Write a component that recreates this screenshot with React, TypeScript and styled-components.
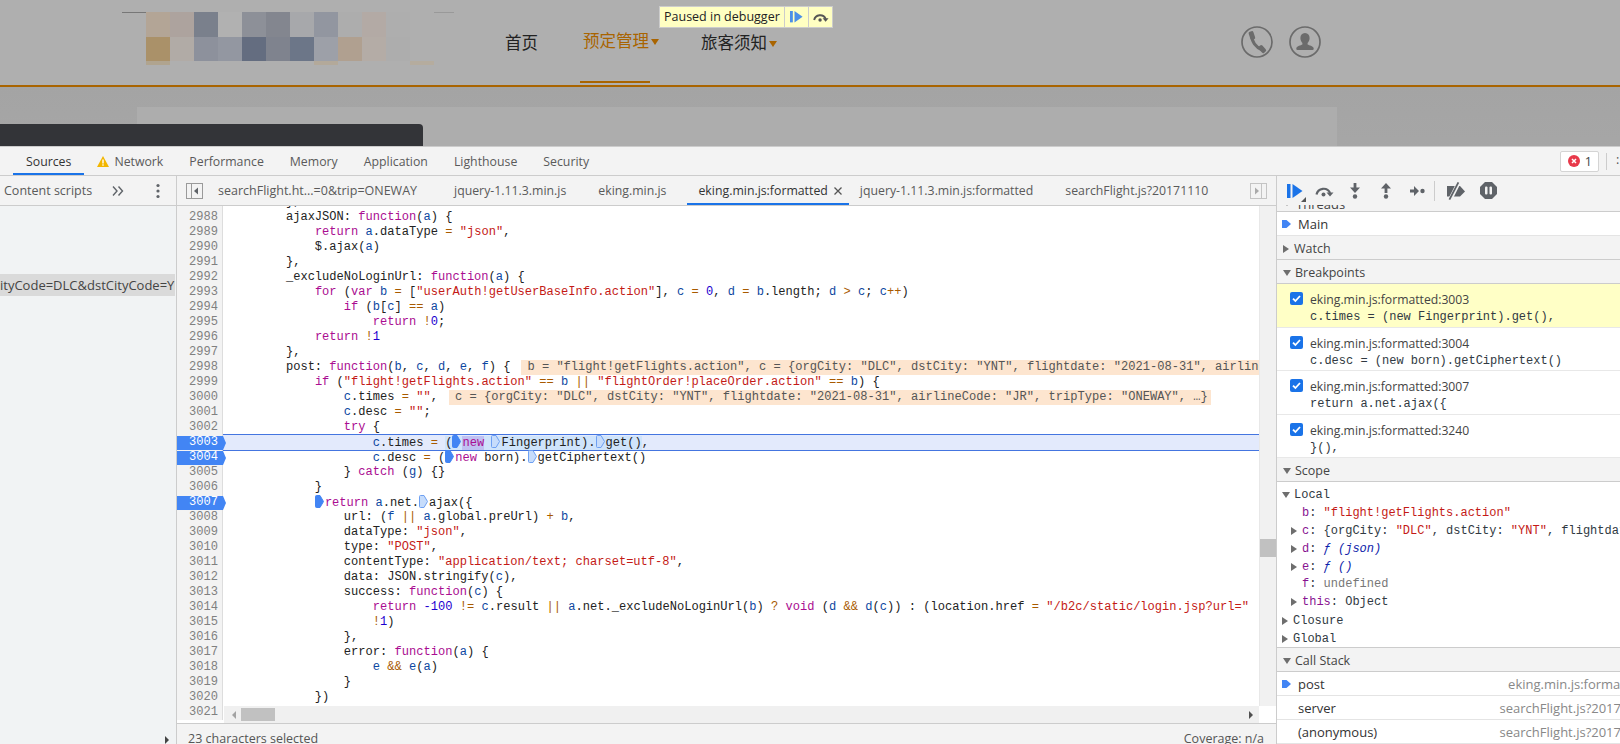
import React from "react";
import styled, { createGlobalStyle } from "styled-components";

const UI_FONT = `"Open Sans", "Noto Sans", sans-serif`;
const MONO_FONT = `"Liberation Mono", monospace`;

const GlobalStyle = createGlobalStyle`
  html, body {
    margin: 0;
    padding: 0;
    background: #f3f3f3;
  }
  #root {
    width: 1620px;
    height: 744px;
    overflow: hidden;
  }
`;

const Page = styled.div`
  display: flex;
  flex-direction: column;
  width: 1620px;
  height: 744px;
  font-family: ${UI_FONT};
  font-size: 12.5px;
  color: #444;
`;

/* ---------- the page behind the devtools ---------- */

const Site = styled.div`
  position: relative;
  height: 146px;
  flex-shrink: 0;
  background: #a6a6a6;
  overflow: hidden;
`;
const SiteBar = styled.div`
  display: flex;
  height: 85px;
  padding-left: 122px;
  background: #afafaf;
  border-bottom: 2px solid #a96400;
`;
const Logo = styled.div`
  display: grid;
  grid-template-columns: repeat(12, 24px);
  grid-template-rows: 25px 24px 4px;
  width: 308px;
  height: 53px;
  margin-top: 12px;
  padding-left: 24px;
  background: linear-gradient(
      90deg,
      #777 0 70px,
      transparent 70px 120px,
      #777 120px 144px,
      transparent 144px 216px,
      #777 216px 240px,
      transparent 240px 264px,
      #777 264px 288px,
      transparent 288px 312px,
      #999 312px 332px
    )
    top left / 332px 1px no-repeat;
`;
const LogoCell = styled.div<{ $c: string }>`
  background: ${(p) => p.$c};
`;
const Nav = styled.nav`
  display: flex;
  margin-left: 51px;
  font-family: "Noto Sans CJK SC", sans-serif;
  font-size: 16.5px;
  line-height: 22px;
  color: #222;
`;
const NavItem = styled.div<{ $active?: boolean }>`
  position: relative;
  display: flex;
  align-items: center;
  align-self: flex-start;
  gap: 2px;
  height: 22px;
  margin: ${(p) => (p.$active ? "29px" : "31px")} 42px 0 0;
  color: ${(p) => (p.$active ? "#a96400" : "#222")};
  &:first-child {
    margin-right: 45px;
  }
  ${(p) =>
    p.$active &&
    `&::after {
      content: "";
      position: absolute;
      left: -3px;
      top: 52px;
      width: 70px;
      height: 2px;
      background: #a96400;
    }`}
`;
const Caret = styled.span`
  width: 0;
  height: 0;
  margin-top: 3px;
  border-left: 4px solid transparent;
  border-right: 4px solid transparent;
  border-top: 6px solid #a96400;
`;
const SiteIcons = styled.div`
  display: flex;
  gap: 16px;
  margin: 26px 299px 0 auto;
`;
const SiteBody = styled.div`
  height: 59px;
  padding: 20px 0 0 137px;
  background: linear-gradient(#a4a4a4, #a7a7a7);
`;
const BlankCard = styled.div`
  width: 1200px;
  height: 39px;
  background: #adadad;
`;
const DarkCard = styled.div`
  position: absolute;
  left: 0;
  top: 124px;
  width: 423px;
  height: 22px;
  background: #333438;
  border-top-right-radius: 4px;
`;
const PausedBadge = styled.div`
  position: absolute;
  left: 659px;
  top: 6px;
  display: flex;
  align-items: stretch;
  height: 22px;
  background: #ffffc2;
  border: 1px solid #ccc;
  box-sizing: border-box;
  color: #222;
`;
const PausedLabel = styled.span`
  padding: 0 4px;
  line-height: 20px;
`;
const PausedButton = styled.span`
  display: flex;
  align-items: center;
  justify-content: center;
  width: 23px;
  border-left: 1px solid #ccc;
`;

/* ---------- devtools chrome ---------- */

const DevTools = styled.div`
  flex: 1;
  display: flex;
  flex-direction: column;
  min-height: 0;
  background: #f3f3f3;
  border-top: 1px solid #ccc;
`;
const MainTabs = styled.div`
  display: flex;
  align-items: stretch;
  height: 28px;
  flex-shrink: 0;
  padding-left: 13px;
  border-bottom: 1px solid #ccc;
`;
const MainTab = styled.div<{ $active?: boolean }>`
  display: flex;
  align-items: center;
  gap: 5px;
  padding: 0 13px;
  font-size: 12.3px;
  color: ${(p) => (p.$active ? "#333" : "#5a5a5a")};
  box-shadow: ${(p) => (p.$active ? "inset 0 -2px 0 #1a73e8" : "none")};
`;
const ErrorBadge = styled.div`
  display: flex;
  align-items: center;
  gap: 5px;
  align-self: center;
  height: 21px;
  padding: 0 6px 0 7px;
  margin-left: auto;
  box-sizing: border-box;
  background: #fff;
  border: 1px solid #d4d4d4;
  border-radius: 2px;
  color: #444;
`;
const TabsEnd = styled.div`
  width: 1px;
  height: 17px;
  align-self: center;
  margin: 0 13px 0 7px;
  background: #ccc;
  position: relative;
  &::after {
    content: ":";
    position: absolute;
    left: 10px;
    top: -2px;
    color: #555;
  }
`;
const Workspace = styled.div`
  flex: 1;
  display: flex;
  min-height: 0;
`;
const Toolbar = styled.div`
  display: flex;
  align-items: center;
  height: 29px;
  flex-shrink: 0;
  background: #f3f3f3;
  border-bottom: 1px solid #ccc;
`;

/* ---------- left navigator ---------- */

const Navigator = styled.aside`
  position: relative;
  display: flex;
  flex-direction: column;
  width: 176px;
  flex-shrink: 0;
  background: #f1f3f4;
  border-right: 1px solid #ccc;
`;
const NavTitle = styled.span`
  margin-left: 4px;
  color: #5a5a5a;
  white-space: nowrap;
`;
const MoreTabs = styled.span`
  display: flex;
  margin-left: 20px;
`;
const MenuSlot = styled.span`
  display: flex;
  margin-left: auto;
  margin-right: 16px;
`;
const FileRow = styled.div`
  height: 22px;
  margin: 68px 1px 0 0;
  background: #dadada;
  line-height: 22px;
  font-size: 13px;
  color: #444;
  white-space: nowrap;
  overflow: hidden;
`;
const CornerMark = styled.span`
  position: absolute;
  left: 165px;
  bottom: 0;
  width: 0;
  height: 0;
  border-top: 4px solid transparent;
  border-left: 4px solid #444;
  border-bottom: 4px solid transparent;
`;

/* ---------- source editor ---------- */

const Center = styled.section`
  flex: 1;
  display: flex;
  flex-direction: column;
  min-width: 0;
`;
const ToggleSlot = styled.span<{ $side: "left" | "right" }>`
  display: flex;
  align-items: center;
  flex-shrink: 0;
  padding: ${(p) => (p.$side === "left" ? "0 4px 0 9px" : "0 9px")};
`;
const EditorTabs = styled.div`
  display: flex;
  align-self: stretch;
  flex: 1;
  gap: 10px;
  height: 100%;
`;
const EditorTab = styled.div<{ $active?: boolean }>`
  display: flex;
  align-items: center;
  gap: 5px;
  padding: ${(p) => (p.$active ? "0 6px 0 11px" : "0 11px")};
  margin-right: ${(p) => (p.$active ? "-10px" : "0")};
  font-size: 12.3px;
  white-space: nowrap;
  color: ${(p) => (p.$active ? "#333" : "#5a5a5a")};
  box-shadow: ${(p) => (p.$active ? "inset 0 -2px 0 #1a73e8" : "none")};
  &:first-child {
    margin-right: 5px;
    font-size: 12.5px;
  }
`;
const Editor = styled.div`
  position: relative;
  flex: 1;
  display: flex;
  min-height: 0;
  background: #fff;
`;
const CodePane = styled.div`
  flex: 1;
  min-width: 0;
  overflow: hidden;
  padding-top: 2px;
`;
const CodeLines = styled.div`
  margin-top: -13px;
  font-family: ${MONO_FONT};
  font-size: 12.07px;
  line-height: 15px;
  color: #222;
`;
const CodeRow = styled.div`
  display: flex;
  height: 15px;
  white-space: pre;
`;
const LineNo = styled.div<{ $bp?: boolean }>`
  position: relative;
  flex-shrink: 0;
  width: 41px;
  padding-right: 4px;
  text-align: right;
  color: ${(p) => (p.$bp ? "#fff" : "#808080")};
  border-right: 1px solid #ddd;
  background: #f3f3f3;
  span {
    position: relative;
  }
  ${(p) =>
    p.$bp &&
    `&::before {
      content: "";
      position: absolute;
      left: 0;
      top: 1px;
      width: 49px;
      height: 14px;
      z-index: 1;
      background: #4285f4;
      clip-path: polygon(0 0, 46px 0, 49px 50%, 46px 100%, 0 100%);
    }
    span { z-index: 2; }`}
`;
const CodeText = styled.div<{ $current?: boolean }>`
  flex: 1;
  min-width: 0;
  padding-left: 5px;
  overflow: ${(p) => (p.$current ? "visible" : "hidden")};
  ${(p) =>
    p.$current &&
    `background: #e3eafc;
     box-shadow: 0 -1px 0 #4475e0, 0 1px 0 #4475e0;`}
`;
const Token = styled.span<{ $c: string }>`
  color: ${(p) => p.$c};
`;
const SearchHit = styled.span`
  color: #aa0d91;
  background: #c0c0f2;
`;
const Selection = styled.span`
  background: #cfe4fb;
`;
const InlineHint = styled.span`
  margin-left: 11px;
  padding: 0 3px 0 6px;
  display: inline-block;
  background: #fde5cf;
  color: #555;
`;
const BpMark = styled.svg`
  display: inline-block;
  vertical-align: -2px;
  margin-right: 1px;
`;
const VTrack = styled.div`
  width: 17px;
  flex-shrink: 0;
  padding-top: 333px;
  box-sizing: border-box;
  background: #f1f1f1;
  border-left: 1px solid #e8e8e8;
`;
const VThumb = styled.div`
  height: 18px;
  background: #c1c1c1;
`;
const HScroll = styled.div`
  position: absolute;
  left: 47px;
  right: 17px;
  bottom: 0;
  height: 17px;
  display: flex;
  align-items: center;
  justify-content: space-between;
  padding: 0 6px 0 8px;
  box-sizing: border-box;
  background: #f0f0f0;
`;
const ScrollCorner = styled.div`
  position: absolute;
  right: 0;
  bottom: 0;
  width: 17px;
  height: 17px;
  background: #fff;
`;
const ArrowLeft = styled.span`
  border-top: 4px solid transparent;
  border-bottom: 4px solid transparent;
  border-right: 4px solid #a3a3a3;
`;
const ArrowRight = styled.span`
  border-top: 4px solid transparent;
  border-bottom: 4px solid transparent;
  border-left: 4px solid #505050;
`;
const HThumb = styled.div`
  width: 34px;
  height: 13px;
  margin: 0 auto 0 5px;
  background: #c1c1c1;
`;
const StatusBar = styled.div`
  display: flex;
  justify-content: space-between;
  height: 21px;
  flex-shrink: 0;
  padding: 7px 12px 0 11px;
  box-sizing: border-box;
  border-top: 1px solid #ccc;
  background: #f3f3f3;
  color: #555;
  line-height: 16px;
  overflow: hidden;
`;

/* ---------- debugger sidebar ---------- */

const Sidebar = styled.aside`
  width: 343px;
  flex-shrink: 0;
  display: flex;
  flex-direction: column;
  border-left: 1px solid #ccc;
  background: #fff;
  overflow: hidden;
`;
const DebugBar = styled(Toolbar)`
  position: relative;
  z-index: 1;
  padding-left: 10px;
  border-bottom: none;
`;
const DebugIcon = styled.span<{ $w: number }>`
  display: flex;
  justify-content: center;
  width: ${(p) => p.$w}px;
`;
const DebugDivider = styled.span`
  width: 1px;
  height: 20px;
  margin: 0 11px 0 7px;
  background: #ccc;
`;
const ResumeMenuMark = styled.span`
  position: absolute;
  left: 24px;
  bottom: 3px;
  width: 0;
  height: 0;
  border-left: 5px solid transparent;
  border-bottom: 5px solid #555;
`;
const ClippedPane = styled.div`
  display: flex;
  align-items: flex-start;
  gap: 5px;
  height: 7px;
  padding-left: 6px;
  overflow: hidden;
  background: #f3f3f3;
  border-bottom: 1px solid #ccc;
  font-size: 13px;
  color: #444;
`;
const ClippedTitle = styled.span`
  line-height: 16px;
  margin-top: -9px;
`;
const ClippedArrow = styled.span`
  margin-top: -5px;
  display: flex;
`;
const PlainRow = styled.div`
  display: flex;
  align-items: center;
  height: 22px;
  flex-shrink: 0;
  padding: 1px 0 0 5px;
  font-size: 13px;
  color: #333;
  border-bottom: 1px solid #e4e4e4;
  white-space: nowrap;
`;
const RowMarker = styled.span`
  display: flex;
  width: 16px;
`;
const StackLocation = styled.span<{ $overflow: number }>`
  margin-left: auto;
  margin-right: -${(p) => p.$overflow}px;
  color: #888;
`;
const PaneHeader = styled.div`
  display: flex;
  align-items: center;
  gap: 4px;
  height: 21px;
  flex-shrink: 0;
  padding: 2px 0 0 6px;
  background: #f3f3f3;
  border-bottom: 1px solid #ccc;
  color: #444;
`;
const Triangle = styled.span<{ $open?: boolean }>`
  width: 0;
  height: 0;
  flex-shrink: 0;
  ${(p) =>
    p.$open
      ? `border-left: 4px solid transparent;
         border-right: 4px solid transparent;
         border-top: 6px solid #6e6e6e;`
      : `border-top: 4px solid transparent;
         border-bottom: 4px solid transparent;
         border-left: 6px solid #6e6e6e;
         margin-right: 1px;`}
`;
const BreakpointRow = styled.div<{ $hit?: boolean }>`
  display: grid;
  grid-template-columns: 13px 1fr;
  column-gap: 7px;
  height: 43.5px;
  flex-shrink: 0;
  padding: 7px 0 0 13px;
  box-sizing: border-box;
  background: ${(p) => (p.$hit ? "#ffffc6" : "#fff")};
  border-bottom: 1px solid #e8e8e8;
  &:last-of-type {
    border-bottom-color: #ccc;
  }
`;
const CheckBox = styled.span`
  display: flex;
  align-items: center;
  justify-content: center;
  width: 13px;
  height: 13px;
  margin-top: 1px;
  border-radius: 2px;
  background: #1a73e8;
`;
const BreakpointFile = styled.div`
  font-size: 12.2px;
  line-height: 18px;
  color: #444;
  white-space: nowrap;
`;
const BreakpointCode = styled.div`
  font-family: ${MONO_FONT};
  font-size: 12px;
  line-height: 17px;
  color: #303942;
  white-space: pre;
`;
const ScopeTree = styled.div`
  padding-top: 4px;
  font-family: ${MONO_FONT};
  font-size: 12px;
  color: #303942;
  border-bottom: 1px solid #ccc;
  white-space: pre;
`;
const ScopeRow = styled.div<{ $depth: number; $h: number }>`
  display: flex;
  align-items: center;
  gap: 4px;
  height: ${(p) => p.$h}px;
  padding-left: ${(p) => 5 + p.$depth * 9}px;
`;
const ScopeLeaf = styled.span`
  margin-left: 2px;
`;
const ScopeKey = styled.span`
  color: #881391;
`;
const ScopeString = styled.span`
  color: #c41a16;
`;
const ScopeFn = styled.span`
  color: #0d22aa;
  font-style: italic;
`;
const ScopeMuted = styled.span`
  color: #777;
`;

/* ---------- data ---------- */

const LOGO_COLORS = [
  "#b3a596", "#ada39e", "#7a808c", "#b1b1b1", "#8d9098", "#83868f", "#a7a8ab", "#9296a0", "#adadad", "#b3aaa5", "#aeaeae", "#afafaf",
  "#aa9169", "#b1aba6", "#8d919c", "#9397a1", "#646d80", "#7f838e", "#6c7688", "#9da0a8", "#b0a090", "#b4aca6", "#adadad", "#afafaf",
  "#b0a48f", "#afafaf", "#afafaf", "#afafaf", "#afafaf", "#afafaf", "#afafaf", "#b3a99a", "#afafaf", "#afafaf", "#afafaf", "#b5ac9e",
];

const MAIN_TABS = ["Performance", "Memory", "Application", "Lighthouse", "Security"];

const OPEN_FILES = [
  "searchFlight.ht...=0&trip=ONEWAY",
  "jquery-1.11.3.min.js",
  "eking.min.js",
  "eking.min.js:formatted",
  "jquery-1.11.3.min.js:formatted",
  "searchFlight.js?20171110",
];

// ◆ / ◇ are the inline breakpoint marks, « » the selection, [new] the search hit
const SOURCE: { n?: number; text: string; hint?: string; bp?: boolean; current?: boolean }[] = [
  { text: "        }," },
  { n: 2988, text: "        ajaxJSON: function(a) {" },
  { n: 2989, text: '            return a.dataType = "json",' },
  { n: 2990, text: "            $.ajax(a)" },
  { n: 2991, text: "        }," },
  { n: 2992, text: "        _excludeNoLoginUrl: function(a) {" },
  { n: 2993, text: '            for (var b = ["userAuth!getUserBaseInfo.action"], c = 0, d = b.length; d > c; c++)' },
  { n: 2994, text: "                if (b[c] == a)" },
  { n: 2995, text: "                    return !0;" },
  { n: 2996, text: "            return !1" },
  { n: 2997, text: "        }," },
  {
    n: 2998,
    text: "        post: function(b, c, d, e, f) {",
    hint: 'b = "flight!getFlights.action", c = {orgCity: "DLC", dstCity: "YNT", flightdate: "2021-08-31", airlineCode: "JR", tripType: "ONEWAY"',
  },
  { n: 2999, text: '            if ("flight!getFlights.action" == b || "flightOrder!placeOrder.action" == b) {' },
  {
    n: 3000,
    text: '                c.times = "",',
    hint: 'c = {orgCity: "DLC", dstCity: "YNT", flightdate: "2021-08-31", airlineCode: "JR", tripType: "ONEWAY", …}',
  },
  { n: 3001, text: '                c.desc = "";' },
  { n: 3002, text: "                try {" },
  { n: 3003, bp: true, current: true, text: "                    c.times = «(◆[new] ◇Fingerprint).◇get()»," },
  { n: 3004, bp: true, text: "                    c.desc = (◆new born).◇getCiphertext()" },
  { n: 3005, text: "                } catch (g) {}" },
  { n: 3006, text: "            }" },
  { n: 3007, bp: true, text: "            ◆return a.net.◇ajax({" },
  { n: 3008, text: "                url: (f || a.global.preUrl) + b," },
  { n: 3009, text: '                dataType: "json",' },
  { n: 3010, text: '                type: "POST",' },
  { n: 3011, text: '                contentType: "application/text; charset=utf-8",' },
  { n: 3012, text: "                data: JSON.stringify(c)," },
  { n: 3013, text: "                success: function(c) {" },
  {
    n: 3014,
    text: '                    return -100 != c.result || a.net._excludeNoLoginUrl(b) ? void (d && d(c)) : (location.href = "/b2c/static/login.jsp?url="',
  },
  { n: 3015, text: "                    !1)" },
  { n: 3016, text: "                }," },
  { n: 3017, text: "                error: function(a) {" },
  { n: 3018, text: "                    e && e(a)" },
  { n: 3019, text: "                }" },
  { n: 3020, text: "            })" },
  { n: 3021, text: "" },
];

const BREAKPOINTS = [
  { line: 3003, code: "c.times = (new Fingerprint).get(),", hit: true },
  { line: 3004, code: "c.desc = (new born).getCiphertext()" },
  { line: 3007, code: "return a.net.ajax({" },
  { line: 3240, code: "}()," },
];

const TOKEN_RE =
  /("[^"]*")|\b(function|return|var|for|if|try|catch|new|void)\b|(-?\b\d+\b)|\b([a-g])\b|(==|!=|\|\||&&|\+\+|[=+>!?])|(\[new\])|([◆◇])/g;

function BreakMark({ filled }: { filled: boolean }) {
  return (
    <BpMark width="9" height="13" viewBox="0 0 9 13">
      <path
        d="M1.5.5h3.5l3.5 6-3.5 6H1.5a1 1 0 0 1-1-1v-10a1 1 0 0 1 1-1z"
        fill={filled ? "#4285f4" : "#c6dcfb"}
        stroke={filled ? "#4285f4" : "#6ea0f2"}
      />
    </BpMark>
  );
}

function highlight(text: string) {
  const out: React.ReactNode[] = [];
  let last = 0;
  for (const m of text.matchAll(TOKEN_RE)) {
    const i = m.index ?? 0;
    if (i > last) out.push(text.slice(last, i));
    if (m[1]) out.push(<Token key={i} $c="#c41a16">{m[1]}</Token>);
    else if (m[2]) out.push(<Token key={i} $c="#aa0d91">{m[2]}</Token>);
    else if (m[3]) out.push(<Token key={i} $c="#1c00cf">{m[3]}</Token>);
    else if (m[4]) out.push(<Token key={i} $c="#0d47a1">{m[4]}</Token>);
    else if (m[5]) out.push(<Token key={i} $c="#a85a00">{m[5]}</Token>);
    else if (m[6]) out.push(<SearchHit key={i}>new</SearchHit>);
    else out.push(<BreakMark key={i} filled={m[7] === "◆"} />);
    last = i + m[0].length;
  }
  if (last < text.length) out.push(text.slice(last));
  return out;
}

function renderCode(text: string) {
  const start = text.indexOf("«");
  if (start < 0) return highlight(text);
  const end = text.indexOf("»");
  return (
    <>
      {highlight(text.slice(0, start))}
      <Selection>{highlight(text.slice(start + 1, end))}</Selection>
      {highlight(text.slice(end + 1))}
    </>
  );
}

/* ---------- drawings ---------- */

const PhoneIcon = () => (
  <svg width="32" height="32" viewBox="0 0 32 32">
    <circle cx="16" cy="16" r="15" fill="none" stroke="#6b6b6b" strokeWidth="1.7" />
    <path d="M10.8 9C10.4 15 14.6 21.4 21.5 24" fill="none" stroke="#6b6b6b" strokeWidth="3" />
    <rect x="8.4" y="5.2" width="5" height="8.6" rx="1.6" transform="rotate(-18 10.9 9.5)" fill="#6b6b6b" />
    <rect x="18.6" y="19" width="5" height="8.2" rx="1.6" transform="rotate(-42 21.1 23)" fill="#6b6b6b" />
  </svg>
);

const UserIcon = () => (
  <svg width="32" height="32" viewBox="0 0 32 32">
    <circle cx="16" cy="16" r="15" fill="none" stroke="#6b6b6b" strokeWidth="1.7" />
    <path
      d="M16 7c-3 0-4.6 2.2-4.6 5 0 2 .8 3.8 2 5v1.6c-1.6 1-5.4 1.4-6 3.4-.3 1 0 2 1 2h15.2c1 0 1.3-1 1-2-.6-2-4.4-2.4-6-3.4V17c1.2-1.2 2-3 2-5 0-2.8-1.6-5-4.6-5z"
      fill="#6b6b6b"
    />
  </svg>
);

const ResumeIcon = ({ color = "#1a73e8", width = 16 }: { color?: string; width?: number }) => (
  <svg width={width} height={(width * 14) / 16} viewBox="0 0 16 14">
    <rect x="0" y="0" width="3.5" height="14" fill={color} />
    <path d="M5.5 0L15.5 7 5.5 14z" fill={color} />
  </svg>
);

const StepOverIcon = ({ color = "#5f6368", width = 20 }: { color?: string; width?: number }) => (
  <svg width={width} height={(width * 12) / 20} viewBox="0 0 20 12">
    <path d="M2.5 9.5a7.2 7.2 0 0 1 13.6-1.5" fill="none" stroke={color} strokeWidth="2.2" />
    <path d="M12.5 7.5h7l-3.5 4z" fill={color} />
    <circle cx="9.5" cy="9.5" r="2" fill={color} />
  </svg>
);

const StepDownIcon = () => (
  <svg width="10" height="16" viewBox="0 0 10 16">
    <path d="M3.6 0h2.8v4.5H10L5 10 0 4.5h3.6z" fill="#5f6368" />
    <circle cx="5" cy="13.5" r="2.2" fill="#5f6368" />
  </svg>
);

const StepUpIcon = () => (
  <svg width="10" height="16" viewBox="0 0 10 16">
    <path d="M5 0l5 5.5H6.4V10H3.6V5.5H0z" fill="#5f6368" />
    <circle cx="5" cy="13.5" r="2.2" fill="#5f6368" />
  </svg>
);

const StepIcon = () => (
  <svg width="15" height="10" viewBox="0 0 15 10">
    <path d="M0 3.6h4V0l5 5-5 5V6.4H0z" fill="#5f6368" />
    <circle cx="12.5" cy="5" r="2.2" fill="#5f6368" />
  </svg>
);

const DeactivateIcon = () => (
  <svg width="20" height="18" viewBox="0 0 20 18">
    <path d="M1 4h13l5 5.5-5 5H1z" fill="#5f6368" />
    <path d="M4 18L13 0" stroke="#f3f3f3" strokeWidth="4" />
    <path d="M3.4 17.6L12.4.4" stroke="#5f6368" strokeWidth="1.8" />
  </svg>
);

const PauseIcon = () => (
  <svg width="17" height="17" viewBox="0 0 17 17">
    <path d="M5 0h7l5 5v7l-5 5H5l-5-5V5z" fill="#5f6368" />
    <rect x="5" y="4.5" width="2.5" height="8" rx="1" fill="#f3f3f3" />
    <rect x="9.5" y="4.5" width="2.5" height="8" rx="1" fill="#f3f3f3" />
  </svg>
);

const WarnIcon = () => (
  <svg width="12" height="11" viewBox="0 0 12 11">
    <path d="M6 0l6 11H0z" fill="#f2b600" />
    <rect x="5.3" y="3.5" width="1.4" height="4" fill="#fff" />
    <rect x="5.3" y="8.3" width="1.4" height="1.4" fill="#fff" />
  </svg>
);

const ErrorIcon = () => (
  <svg width="12" height="12" viewBox="0 0 12 12">
    <circle cx="6" cy="6" r="6" fill="#e8394a" />
    <path d="M4 4l4 4M8 4l-4 4" stroke="#fff" strokeWidth="1.5" />
  </svg>
);

const PaneToggleLeft = () => (
  <svg width="17" height="16" viewBox="0 0 17 16">
    <rect x=".5" y=".5" width="16" height="15" fill="none" stroke="#9a9a9a" />
    <path d="M5.5 1v14" stroke="#9a9a9a" />
    <path d="M12 4.5v7L8 8z" fill="#5f6368" />
  </svg>
);

const PaneToggleRight = () => (
  <svg width="17" height="16" viewBox="0 0 17 16">
    <rect x=".5" y=".5" width="16" height="15" fill="none" stroke="#c4c4c4" />
    <path d="M11.5 1v14" stroke="#c4c4c4" />
    <path d="M5 4.5v7L9 8z" fill="#aaa" />
  </svg>
);

const DotsIcon = () => (
  <svg width="4" height="16" viewBox="0 0 4 16">
    <circle cx="2" cy="2.5" r="1.6" fill="#5f6368" />
    <circle cx="2" cy="8" r="1.6" fill="#5f6368" />
    <circle cx="2" cy="13.5" r="1.6" fill="#5f6368" />
  </svg>
);

const DoubleChevron = () => (
  <svg width="12" height="10" viewBox="0 0 12 10">
    <path d="M1 .5L5 5 1 9.5M6.5.5l4 4.5-4 4.5" fill="none" stroke="#5f6368" strokeWidth="1.4" />
  </svg>
);

const CloseIcon = () => (
  <svg width="10" height="10" viewBox="0 0 10 10">
    <path d="M1.5 1.5l7 7M8.5 1.5l-7 7" stroke="#555" strokeWidth="1.3" />
  </svg>
);

const CurrentMark = () => (
  <svg width="9" height="10" viewBox="0 0 9 10">
    <path d="M0 1h4.5L9 5 4.5 9H0z" fill="#4285f4" />
  </svg>
);

const CheckMark = () => (
  <svg width="11" height="11" viewBox="0 0 11 11">
    <path d="M2 5.6l2.4 2.4L9 3" fill="none" stroke="#fff" strokeWidth="1.8" />
  </svg>
);

export default function App() {
  return (
    <Page>
      <GlobalStyle />
      <Site>
        <SiteBar>
          <Logo>
            {LOGO_COLORS.map((c, i) => (
              <LogoCell key={i} $c={c} />
            ))}
          </Logo>
          <Nav>
            <NavItem>首页</NavItem>
            <NavItem $active>
              预定管理
              <Caret />
            </NavItem>
            <NavItem>
              旅客须知
              <Caret />
            </NavItem>
          </Nav>
          <SiteIcons>
            <PhoneIcon />
            <UserIcon />
          </SiteIcons>
        </SiteBar>
        <SiteBody>
          <BlankCard />
        </SiteBody>
        <DarkCard />
        <PausedBadge>
          <PausedLabel>Paused in debugger</PausedLabel>
          <PausedButton>
            <ResumeIcon color="#4b8fe8" width={13} />
          </PausedButton>
          <PausedButton>
            <StepOverIcon color="#555" width={17} />
          </PausedButton>
        </PausedBadge>
      </Site>

      <DevTools>
        <MainTabs>
          <MainTab $active>Sources</MainTab>
          <MainTab>
            <WarnIcon />
            Network
          </MainTab>
          {MAIN_TABS.map((t) => (
            <MainTab key={t}>{t}</MainTab>
          ))}
          <ErrorBadge>
            <ErrorIcon />1
          </ErrorBadge>
          <TabsEnd />
        </MainTabs>

        <Workspace>
          <Navigator>
            <Toolbar>
              <NavTitle>Content scripts</NavTitle>
              <MoreTabs>
                <DoubleChevron />
              </MoreTabs>
              <MenuSlot>
                <DotsIcon />
              </MenuSlot>
            </Toolbar>
            <FileRow>ityCode=DLC&amp;dstCityCode=YNT&amp;flightDate=2021</FileRow>
            <CornerMark />
          </Navigator>

          <Center>
            <Toolbar>
              <ToggleSlot $side="left">
                <PaneToggleLeft />
              </ToggleSlot>
              <EditorTabs>
                {OPEN_FILES.map((f) => (
                  <EditorTab key={f} $active={f === "eking.min.js:formatted"}>
                    {f}
                    {f === "eking.min.js:formatted" && <CloseIcon />}
                  </EditorTab>
                ))}
              </EditorTabs>
              <ToggleSlot $side="right">
                <PaneToggleRight />
              </ToggleSlot>
            </Toolbar>
            <Editor>
              <CodePane>
                <CodeLines>
                  {SOURCE.map((line, i) => (
                    <CodeRow key={i}>
                      <LineNo $bp={line.bp}>
                        <span>{line.n}</span>
                      </LineNo>
                      <CodeText $current={line.current}>
                        {renderCode(line.text)}
                        {line.hint && <InlineHint>{line.hint}</InlineHint>}
                      </CodeText>
                    </CodeRow>
                  ))}
                </CodeLines>
              </CodePane>
              <VTrack>
                <VThumb />
              </VTrack>
              <HScroll>
                <ArrowLeft />
                <HThumb />
                <ArrowRight />
              </HScroll>
              <ScrollCorner />
            </Editor>
            <StatusBar>
              <span>23 characters selected</span>
              <span>Coverage: n/a</span>
            </StatusBar>
          </Center>

          <Sidebar>
            <DebugBar>
              <DebugIcon $w={16}>
                <ResumeIcon />
              </DebugIcon>
              <ResumeMenuMark />
              <DebugIcon $w={42}>
                <StepOverIcon />
              </DebugIcon>
              <DebugIcon $w={20}>
                <StepDownIcon />
              </DebugIcon>
              <DebugIcon $w={42}>
                <StepUpIcon />
              </DebugIcon>
              <DebugIcon $w={20}>
                <StepIcon />
              </DebugIcon>
              <DebugDivider />
              <DebugIcon $w={20}>
                <DeactivateIcon />
              </DebugIcon>
              <DebugIcon $w={44}>
                <PauseIcon />
              </DebugIcon>
            </DebugBar>
            <ClippedPane>
              <ClippedArrow>
                <Triangle $open />
              </ClippedArrow>
              <ClippedTitle>Threads</ClippedTitle>
            </ClippedPane>
            <PlainRow>
              <RowMarker>
                <CurrentMark />
              </RowMarker>
              Main
            </PlainRow>
            <PaneHeader>
              <Triangle />
              Watch
            </PaneHeader>
            <PaneHeader>
              <Triangle $open />
              Breakpoints
            </PaneHeader>
            {BREAKPOINTS.map((b) => (
              <BreakpointRow key={b.line} $hit={b.hit}>
                <CheckBox>
                  <CheckMark />
                </CheckBox>
                <div>
                  <BreakpointFile>eking.min.js:formatted:{b.line}</BreakpointFile>
                  <BreakpointCode>{b.code}</BreakpointCode>
                </div>
              </BreakpointRow>
            ))}
            <PaneHeader>
              <Triangle $open />
              Scope
            </PaneHeader>
            <ScopeTree>
              <ScopeRow $depth={0} $h={18}>
                <Triangle $open />
                Local
              </ScopeRow>
              <ScopeRow $depth={2} $h={17.8}>
                <ScopeLeaf>
                  <ScopeKey>b</ScopeKey>: <ScopeString>"flight!getFlights.action"</ScopeString>
                </ScopeLeaf>
              </ScopeRow>
              <ScopeRow $depth={1} $h={17.8}>
                <Triangle />
                <span>
                  <ScopeKey>c</ScopeKey>: {"{orgCity: "}
                  <ScopeString>"DLC"</ScopeString>, dstCity: <ScopeString>"YNT"</ScopeString>, flightdate:{" "}
                  <ScopeString>"2021-08-31"</ScopeString>
                </span>
              </ScopeRow>
              <ScopeRow $depth={1} $h={17.8}>
                <Triangle />
                <span>
                  <ScopeKey>d</ScopeKey>: <ScopeFn>ƒ (json)</ScopeFn>
                </span>
              </ScopeRow>
              <ScopeRow $depth={1} $h={17.8}>
                <Triangle />
                <span>
                  <ScopeKey>e</ScopeKey>: <ScopeFn>ƒ ()</ScopeFn>
                </span>
              </ScopeRow>
              <ScopeRow $depth={2} $h={17.8}>
                <ScopeLeaf>
                  <ScopeKey>f</ScopeKey>: <ScopeMuted>undefined</ScopeMuted>
                </ScopeLeaf>
              </ScopeRow>
              <ScopeRow $depth={1} $h={17.8}>
                <Triangle />
                <span>
                  <ScopeKey>this</ScopeKey>: Object
                </span>
              </ScopeRow>
              <ScopeRow $depth={0} $h={19}>
                <Triangle />
                Closure
              </ScopeRow>
              <ScopeRow $depth={0} $h={17}>
                <Triangle />
                Global
              </ScopeRow>
            </ScopeTree>
            <PaneHeader>
              <Triangle $open />
              Call Stack
            </PaneHeader>
            <PlainRow>
              <RowMarker>
                <CurrentMark />
              </RowMarker>
              post
              <StackLocation $overflow={58}>eking.min.js:formatted:3003</StackLocation>
            </PlainRow>
            <PlainRow>
              <RowMarker />
              server
              <StackLocation $overflow={49}>searchFlight.js?20171110:85</StackLocation>
            </PlainRow>
            <PlainRow>
              <RowMarker />
              (anonymous)
              <StackLocation $overflow={49}>searchFlight.js?20171110:21</StackLocation>
            </PlainRow>
          </Sidebar>
        </Workspace>
      </DevTools>
    </Page>
  );
}
